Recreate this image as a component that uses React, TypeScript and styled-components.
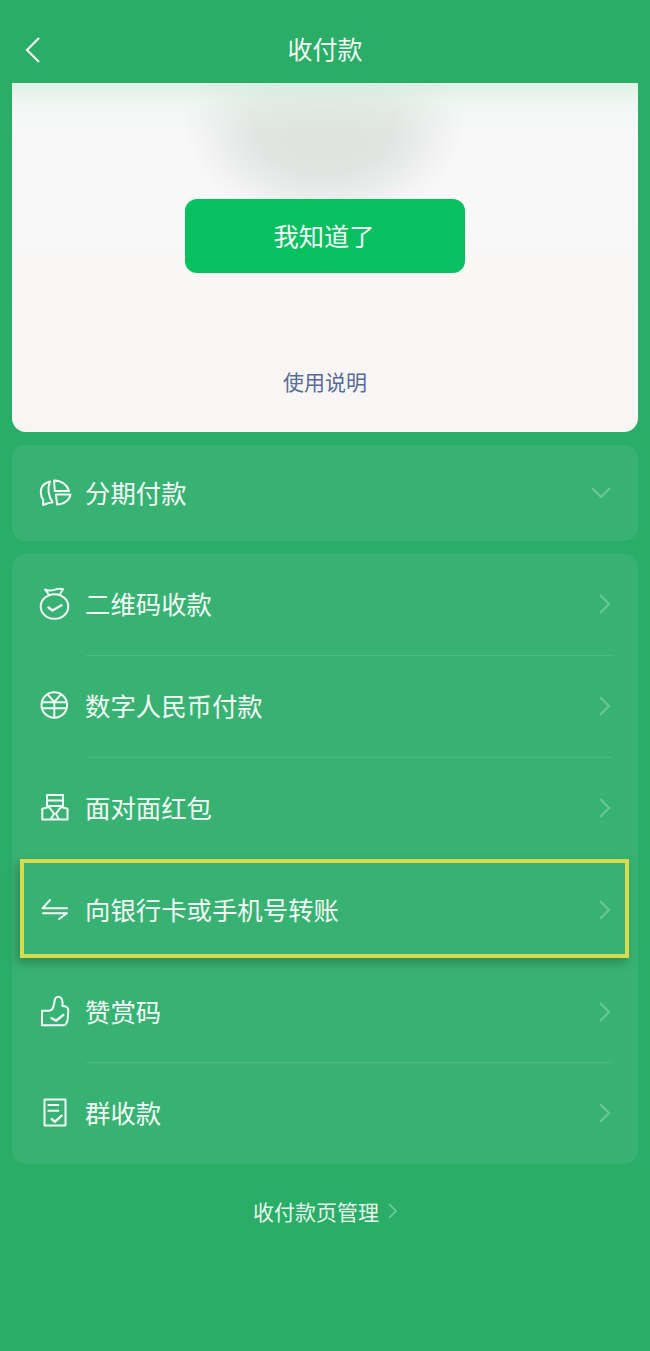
import React from 'react';
import styled, { createGlobalStyle } from 'styled-components';

const GlobalStyle = createGlobalStyle`
  html, body {
    margin: 0;
    padding: 0;
    background: #2aad67;
  }

  body {
    font-family: 'Noto Sans CJK SC', 'Noto Sans', sans-serif;
    color: #f2fbf6;
  }
`;

const Screen = styled.div`
  display: flex;
  flex-direction: column;
  width: 650px;
  height: 1351px;
  overflow: hidden;
  background: #2aad67;
`;

const TopBar = styled.header`
  display: flex;
  align-items: center;
  justify-content: center;
  position: relative;
  height: 83px;
  padding-top: 13px;
  box-sizing: border-box;
  font-size: 25px;
  line-height: 32px;
`;

const BackIcon = styled.svg`
  position: absolute;
  left: 24px;
  top: 35px;
  width: 18px;
  height: 30px;
  fill: none;
  stroke: #f2fbf6;
  stroke-width: 2.2;
`;

const Content = styled.main`
  display: flex;
  flex-direction: column;
  gap: 13px;
  padding: 0 12px;
`;

const NoticeCard = styled.section`
  display: flex;
  flex-direction: column;
  align-items: center;
  height: 349px;
  box-sizing: border-box;
  padding-top: 116px;
  border-radius: 0 0 14px 14px;
  background:
    linear-gradient(180deg, rgba(212, 240, 223, 0.8) 0, rgba(228, 244, 235, 0.4) 20px, rgba(248, 248, 248, 0) 52px),
    radial-gradient(ellipse 140px 100px at 312px 42px, rgba(222, 226, 223, 1) 0, rgba(224, 228, 225, 0.95) 50%, rgba(248, 248, 248, 0) 100%),
    linear-gradient(180deg, #f8f8f8 0, #f8f8f8 130px, #f8f6f4 230px, #f8f6f5 100%);
`;

const ConfirmButton = styled.button`
  width: 280px;
  height: 74px;
  border: 0;
  border-radius: 12px;
  background: #07c160;
  color: #f2fbf6;
  font-family: inherit;
  font-size: 25.3px;
  padding: 0 2px 2px 0;
`;

const HelpLink = styled.a`
  margin-top: 93px;
  color: #576b95;
  font-size: 21px;
  line-height: 30px;
`;

const Panel = styled.section`
  display: flex;
  flex-direction: column;
  border-radius: 14px;
  background: #38b272;
`;

const Row = styled.div<{ $height: number }>`
  display: flex;
  align-items: center;
  position: relative;
  height: ${(p) => p.$height}px;
  padding: 0 26px 0 28px;
  font-size: 25.4px;
`;

const HighlightBox = styled.div`
  position: absolute;
  left: 8px;
  right: 9px;
  top: 0;
  height: 99px;
  box-sizing: border-box;
  border: 4px solid #d7db4c;
  box-shadow: -3px 5px 9px rgba(20, 70, 40, 0.38);
`;

const RowIcon = styled.svg`
  flex: none;
  width: 30px;
  height: 30px;
  margin-right: 15px;
  overflow: visible;
  fill: none;
  stroke: #f2fbf6;
  stroke-width: 2;
  stroke-linejoin: round;
  stroke-linecap: round;
`;

const RowLabel = styled.span`
  flex: 1;
  position: relative;
  padding-bottom: 2px;
`;

const Chevron = styled.svg`
  flex: none;
  position: relative;
  width: 14px;
  height: 24px;
  fill: none;
  stroke: rgba(255, 255, 255, 0.25);
  stroke-width: 2.2;
`;

const ChevronDown = styled.svg`
  flex: none;
  width: 22px;
  height: 14px;
  fill: none;
  stroke: rgba(255, 255, 255, 0.25);
  stroke-width: 2.2;
`;

const Divider = styled.div<{ $visible: boolean }>`
  height: 1px;
  margin: 0 26px 0 74px;
  background: ${(p) => (p.$visible ? 'rgba(255, 255, 255, 0.1)' : 'transparent')};
`;

const FooterLink = styled.a`
  display: flex;
  align-items: center;
  justify-content: center;
  gap: 9px;
  margin-top: 32px;
  color: #e6f6ed;
  font-size: 21px;
  line-height: 30px;
`;

const FooterChevron = styled.svg`
  width: 9px;
  height: 16px;
  fill: none;
  stroke: rgba(255, 255, 255, 0.35);
  stroke-width: 1.6;
`;

const installmentIcon = (
  <>
    <path d="M10 3.500C4 5 0.800 9 0.800 14.300C0.800 17.500 1.800 20 3.300 22L3 27L8.500 25C10 25 11 25 12.500 24.300C8.500 18 7.500 10 10 3.500Z" />
    <path d="M14 2.500C21.500 2.500 27.500 7 29 13H14.800L14 2.500Z" />
    <path d="M16 16.500H30.500C29.500 22 24 26.500 17 26.500L16 16.500Z" />
  </>
);

const moneyBagIcon = (
  <>
    <ellipse cx="14.500" cy="17.500" rx="13.800" ry="12.300" />
    <path d="M9.500 6.500L5 0.500C9 2.200 12 1.600 15 0.600C18 -0.400 20.500 -0.400 23 0.200L19.500 5.800" />
    <path d="M8.500 18.500L12.500 21.500L21.500 16.300" strokeWidth="2.400" />
  </>
);

const digitalYuanIcon = (
  <>
    <circle cx="14.300" cy="14" r="12.800" />
    <path d="M8 3.800L14.300 11L20.600 3.800" />
    <path d="M3 11.300H25.600M2.500 17.300H26" />
    <path d="M14.300 11V26.500" />
  </>
);

const redPacketIcon = (
  <>
    <path d="M7 13V2H23V13H7Z" />
    <path d="M7 7.500H23" />
    <path d="M2.300 15.700L9 14L14 20.700L10.700 26.500M2.300 15.700V26.500H27.500V15.700L21 14L16 20.700L19 26.500" />
  </>
);

const transferIcon = (
  <>
    <path d="M10 5L2.500 13.300H27" />
    <path d="M3 18.300H27L19 24" />
  </>
);

const thumbIcon = (
  <>
    <path d="M2 13.700H9C12 13.700 13.500 10.500 14 7L15 2.300C15.500 0 18.500 -1 20.500 0.500C22.500 2 23 5 22.300 9C25.500 9 28.500 10 28.300 14L27.700 22C27.300 26 25.500 28.300 23 28.300H2V13.700Z" />
    <path d="M11.700 21.300L16 23.700L23.300 18" strokeWidth="2.400" />
  </>
);

const billIcon = (
  <>
    <path d="M4.500 1.500H25.500V27.500H4.500V1.500Z" />
    <path d="M8.300 7H18.300M8.300 12.700H18.300" />
    <path d="M11.700 21L15 23.700L21.700 17.700" strokeWidth="2.400" />
  </>
);

const services = [
  { label: '二维码收款', icon: moneyBagIcon },
  { label: '数字人民币付款', icon: digitalYuanIcon },
  { label: '面对面红包', icon: redPacketIcon },
  { label: '向银行卡或手机号转账', icon: transferIcon, highlighted: true },
  { label: '赞赏码', icon: thumbIcon },
  { label: '群收款', icon: billIcon },
];

const App = () => {
  return (
    <>
      <GlobalStyle />
      <Screen>
        <TopBar>
          <BackIcon viewBox="0 0 18 30">
            <path d="M15 3L3 15L15 27" />
          </BackIcon>
          收付款
        </TopBar>
        <Content>
          <NoticeCard>
            <ConfirmButton type="button">我知道了</ConfirmButton>
            <HelpLink>使用说明</HelpLink>
          </NoticeCard>
          <Panel>
            <Row $height={96}>
              <RowIcon viewBox="0 0 30 30">{installmentIcon}</RowIcon>
              <RowLabel>分期付款</RowLabel>
              <ChevronDown viewBox="0 0 22 14">
                <path d="M2 2L11 11L20 2" />
              </ChevronDown>
            </Row>
          </Panel>
          <Panel>
            {services.map((item, i) => (
              <React.Fragment key={item.label}>
                <Row $height={100.8}>
                  {item.highlighted && <HighlightBox />}
                  <RowIcon viewBox="0 0 30 30">{item.icon}</RowIcon>
                  <RowLabel>{item.label}</RowLabel>
                  <Chevron viewBox="0 0 14 24">
                    <path d="M2 3L11 12L2 21" />
                  </Chevron>
                </Row>
                {i < services.length - 1 && <Divider $visible={i !== 2 && i !== 3} />}
              </React.Fragment>
            ))}
          </Panel>
        </Content>
        <FooterLink>
          收付款页管理
          <FooterChevron viewBox="0 0 9 16">
            <path d="M1 1L8 8L1 15" />
          </FooterChevron>
        </FooterLink>
      </Screen>
    </>
  );
};

export default App;
